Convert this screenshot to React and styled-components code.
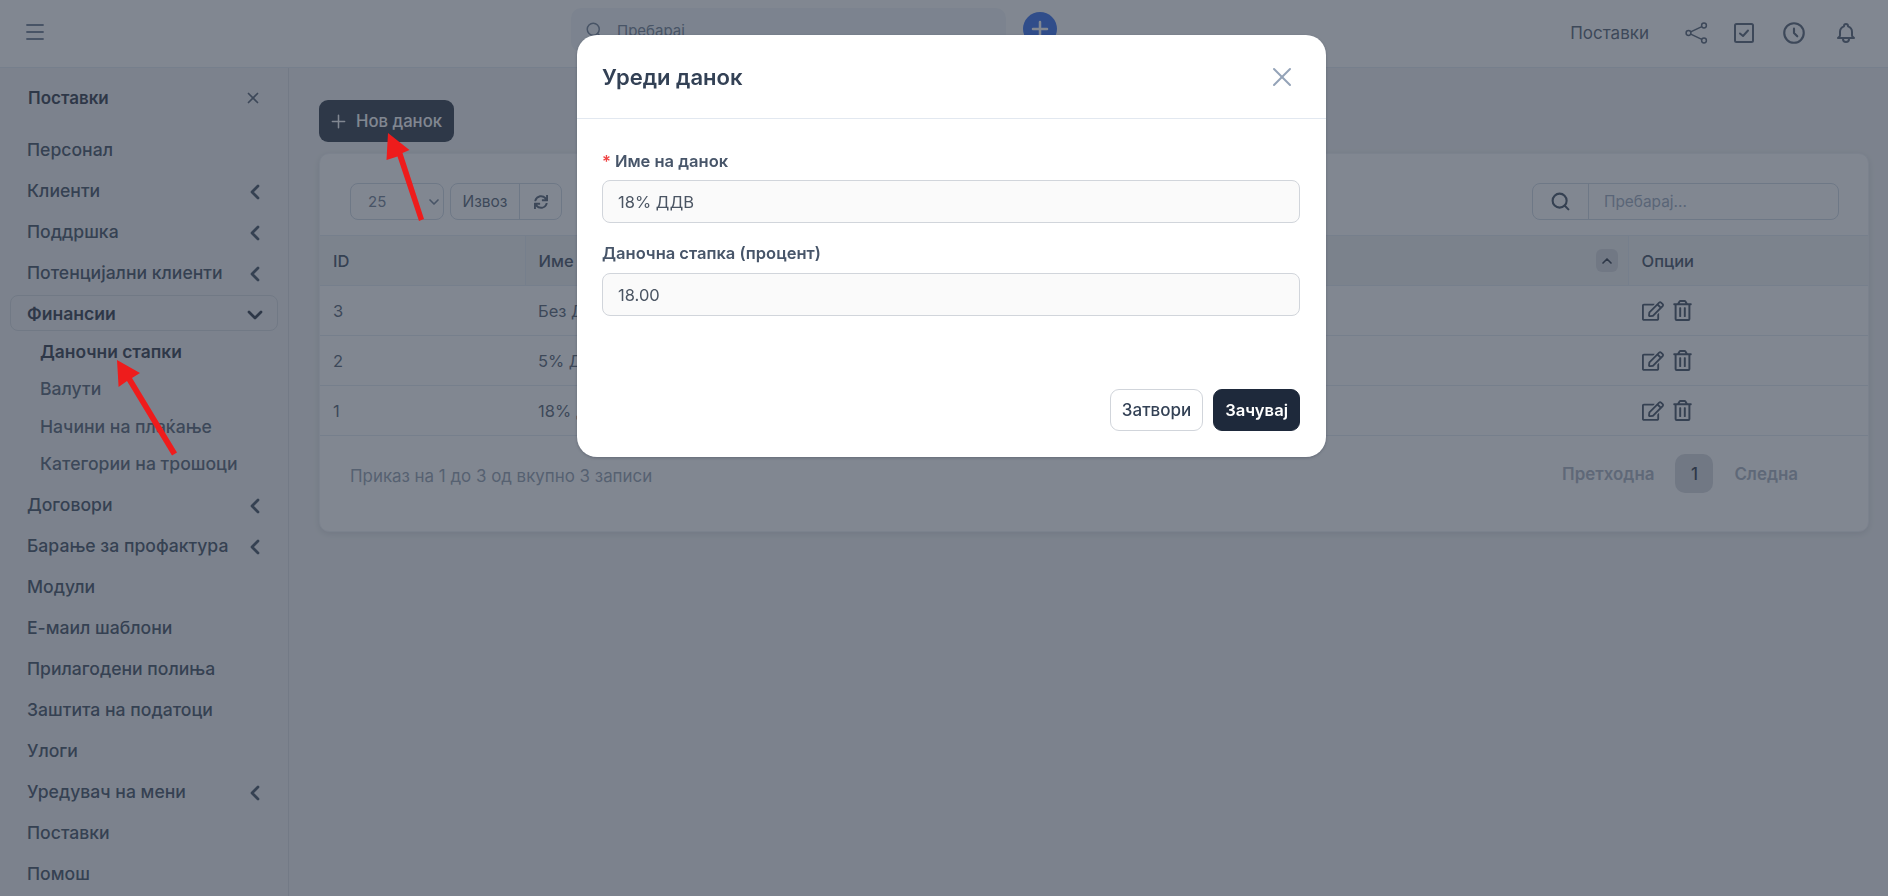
import React from 'react';
import styled, { createGlobalStyle } from 'styled-components';
import { Menu, Plus, X, ChevronLeft, ChevronDown, ChevronUp, Search as SearchLine } from 'lucide-react';
import { HiOutlineClock, HiOutlineBell } from 'react-icons/hi';
import { FaRegEdit, FaRegTrashAlt, FaSync } from 'react-icons/fa';

const GlobalStyle = createGlobalStyle`
  * { box-sizing: border-box; }
  html, body { margin: 0; padding: 0; height: 100%; overflow: hidden; }
  body { font-family: Inter, "Noto Sans", sans-serif; background: #f1f2f3; color: #334155; }
`;

const Page = styled.div`
  height: 100vh;
  display: flex;
  flex-direction: column;
  overflow: hidden;
`;

const Topbar = styled.header`
  height: 68px;
  flex: none;
  background: #fff;
  border-bottom: 1px solid #e2e8f0;
  display: flex;
  align-items: flex-start;
  padding: 0 30px 0 23px;
`;

const MenuButton = styled.div`
  width: 24px;
  height: 64px;
  display: flex;
  align-items: center;
  color: #64748b;
`;

const TopSearch = styled.div`
  margin: 8px 0 0 524px;
  width: 435px;
  height: 44px;
  border-radius: 10px;
  background: #f1f5f9;
  display: flex;
  align-items: center;
  gap: 14px;
  padding: 0 0 0 14px;
  font-size: 15px;
  color: #64748b;
`;

const QuickAdd = styled.div`
  margin: 12px 0 0 17px;
  width: 34px;
  height: 34px;
  border-radius: 50%;
  background: #2563eb;
  color: #fff;
  display: flex;
  align-items: center;
  justify-content: center;
`;

const TopRight = styled.div`
  margin-left: auto;
  height: 66px;
  display: flex;
  align-items: center;
  font-size: 17px;
  color: #475569;
`;

const TopLink = styled.span`
  margin-right: 35px;
`;

const TopIcon = styled.span`
  display: flex;
  color: #475569;
  margin-right: ${p => p.$gap}px;
`;

const Body = styled.div`
  flex: 1;
  display: flex;
  min-height: 0;
`;

const Sidebar = styled.aside`
  width: 289px;
  flex: none;
  border-right: 1px solid #d8dce2;
  padding: 20px 10px 0 10px;
  overflow: hidden;
`;

const SideTitle = styled.div`
  display: flex;
  align-items: center;
  justify-content: space-between;
  height: 20px;
  padding: 0 16px 0 18px;
  margin-bottom: 23px;
  font-size: 17px;
  font-weight: 600;
  color: #1e293b;
`;

const SideClose = styled.span`
  display: flex;
  color: #475569;
`;

const Nav = styled.nav`
  display: flex;
  flex-direction: column;
  gap: 5px;
`;

const NavItem = styled.div`
  height: 36px;
  flex: none;
  display: flex;
  align-items: center;
  justify-content: space-between;
  padding: 0 10px 0 16px;
  font-size: 17.6px;
  border-radius: 8px;
  border: 1px solid ${p => (p.$open ? '#d3d8df' : 'transparent')};
  font-weight: ${p => (p.$open ? 600 : 500)};
  color: ${p => (p.$open ? '#1e293b' : '#334155')};
  white-space: nowrap;

  svg {
    margin-top: 4px;
  }
`;

const SubList = styled.div`
  display: flex;
  flex-direction: column;
  margin: -3px 0 -1px;
`;

const SubItem = styled.div`
  height: 37.33px;
  display: flex;
  align-items: center;
  padding-left: 30px;
  font-size: ${p => (p.$active ? 17.4 : 17.6)}px;
  font-weight: ${p => (p.$active ? 600 : 500)};
  color: ${p => (p.$active ? '#1e293b' : '#475569')};
`;

const Main = styled.main`
  flex: 1;
  min-width: 0;
  padding: 32px 19px 0 30px;
`;

const NewButton = styled.div`
  display: inline-flex;
  align-items: center;
  gap: 7px;
  height: 42px;
  padding: 0 12px 0 9px;
  border-radius: 9px;
  background: #1e293b;
  color: #fff;
  font-size: 16.7px;
  font-weight: 500;
`;

const Card = styled.section`
  margin-top: 11px;
  height: 379px;
  background: #fff;
  border: 1px solid #eef0f3;
  border-radius: 10px;
  box-shadow: 0 2px 6px rgba(15, 23, 42, 0.12);
  overflow: hidden;
`;

const Toolbar = styled.div`
  height: 81px;
  padding: 29px 29px 0 30px;
  display: flex;
  align-items: flex-start;
`;

const PerPage = styled.div`
  width: 94px;
  height: 37px;
  border: 1px solid #cbd5e1;
  border-radius: 8px;
  display: flex;
  align-items: center;
  justify-content: space-between;
  padding: 0 1px 0 17px;
  font-size: 15px;
  color: #64748b;
`;

const ButtonGroup = styled.div`
  margin-left: 6px;
  height: 37px;
  display: flex;
  border: 1px solid #cbd5e1;
  border-radius: 8px;
  font-size: 15.5px;
  color: #475569;
`;

const GroupCell = styled.div`
  width: ${p => p.$width}px;
  display: flex;
  align-items: center;
  justify-content: center;
  & + & { border-left: 1px solid #cbd5e1; }
`;

const TableSearch = styled.div`
  margin-left: auto;
  width: 307px;
  height: 37px;
  display: flex;
  border: 1px solid #cbd5e1;
  border-radius: 8px;
  font-size: 15.4px;
  color: #94a3b8;
`;

const SearchAddon = styled.div`
  width: 56px;
  flex: none;
  display: flex;
  align-items: center;
  justify-content: center;
  border-right: 1px solid #cbd5e1;
  color: #334155;
`;

const SearchText = styled.div`
  display: flex;
  align-items: center;
  padding-left: 15px;
`;

const Table = styled.table`
  width: 100%;
  border-collapse: collapse;
  table-layout: fixed;
  font-size: 16.5px;
  color: #475569;
`;

const Th = styled.th`
  width: ${p => (p.$width ? `${p.$width}px` : 'auto')};
  height: 50px;
  padding: 0 13px;
  text-align: left;
  font-weight: 500;
  color: #334155;
  background: ${p => (p.$plain ? '#f2f3f5' : '#eff0f2')};
  border-top: 1px solid #e2e8f0;
  border-bottom: 1px solid #e2e8f0;
  & + & { border-left: 1px solid #e2e8f0; }
`;

const ThInner = styled.div`
  display: flex;
  align-items: center;
  justify-content: space-between;
  margin-right: -3px;
`;

const SortBadge = styled.span`
  width: 22px;
  height: 23px;
  border-radius: 6px;
  background: #d3d6db;
  color: #1e293b;
  display: flex;
  align-items: center;
  justify-content: center;
`;

const Td = styled.td`
  height: 50px;
  padding: 0 11px 0 13px;
  border-bottom: 1px solid #e2e8f0;
`;

const RowActions = styled.div`
  display: flex;
  align-items: center;
  gap: 8px;
  margin-left: 1px;
  color: #334155;
`;

const TableFooter = styled.div`
  display: flex;
  align-items: flex-start;
  justify-content: space-between;
  padding: 18px 70px 0 30px;
  font-size: 16.9px;
  color: #8b97a8;
`;

const FooterInfo = styled.span`
  margin-top: 12px;
`;

const Pager = styled.div`
  display: flex;
  align-items: center;
  gap: 21px;
  font-weight: 600;
  color: #a3acba;
`;

const PageNumber = styled.div`
  width: 38px;
  height: 39px;
  border-radius: 10px;
  background: #d3d6db;
  color: #1e293b;
  font-weight: 500;
  display: flex;
  align-items: center;
  justify-content: center;
`;

const Overlay = styled.div`
  position: fixed;
  inset: 0;
  background: rgba(55, 65, 81, 0.63);
`;

const Modal = styled.div`
  position: fixed;
  top: 35px;
  left: 577px;
  width: 749px;
  height: 422px;
  background: #fff;
  border-radius: 20px;
  box-shadow: 0 1px 3px rgba(15, 23, 42, 0.25);
  display: flex;
  flex-direction: column;
`;

const ModalHead = styled.div`
  height: 84px;
  flex: none;
  border-bottom: 1px solid #e2e8f0;
  display: flex;
  align-items: center;
  justify-content: space-between;
  padding: 0 28px 0 25px;
`;

const ModalTitle = styled.h4`
  margin: 0;
  font-size: 22px;
  font-weight: 600;
  color: #334155;
`;

const ModalClose = styled.span`
  display: flex;
  color: #94a3b8;
`;

const ModalBody = styled.div`
  flex: 1;
  padding: 32px 26px 0 25px;
`;

const Label = styled.label`
  display: block;
  height: 20px;
  line-height: 20px;
  font-size: 16.5px;
  font-weight: 600;
  color: #475569;
`;

const Required = styled.span`
  color: #ef4444;
  margin-right: 4px;
`;

const Input = styled.input`
  display: block;
  width: 100%;
  height: 43px;
  margin: 9px 0 20px;
  padding: 0 15px;
  border: 1px solid #d1d5db;
  border-radius: 8px;
  background: #fafafa;
  font-family: inherit;
  font-size: 16.5px;
  color: #4b5563;
  outline: none;
  & ~ & { margin-top: 10px; }
`;

const ModalFoot = styled.div`
  display: flex;
  justify-content: flex-end;
  gap: 10px;
  padding: 0 26px 26px;
`;

const FootButton = styled.div`
  height: 42px;
  padding: 0 11px;
  border-radius: 9px;
  display: flex;
  align-items: center;
  font-size: ${p => (p.$primary ? 16.6 : 17)}px;
  font-weight: ${p => (p.$primary ? 600 : 500)};
  color: ${p => (p.$primary ? '#fff' : '#334155')};
  background: ${p => (p.$primary ? '#1e293b' : '#fff')};
  border: 1px solid ${p => (p.$primary ? '#1e293b' : '#d1d5db')};
`;

const Annotations = styled.svg`
  position: fixed;
  inset: 0;
  width: 100%;
  height: 100%;
  pointer-events: none;
`;

const ShareIcon = () => (
  <svg width="24" height="24" viewBox="0 0 24 24" fill="none" stroke="currentColor" strokeWidth="1.5">
    <circle cx="20" cy="4.5" r="2.4" />
    <circle cx="4.5" cy="12" r="2.4" />
    <circle cx="20" cy="19.5" r="2.4" />
    <path d="M6.7 10.9L17.8 5.6M6.7 13.1l11.1 5.3" />
  </svg>
);

const CheckSquare = () => (
  <svg width="24" height="24" viewBox="0 0 24 24" fill="none" stroke="currentColor" strokeWidth="2" strokeLinecap="round" strokeLinejoin="round">
    <rect x="3" y="3" width="18" height="18" rx="1.5" />
    <path d="M8 12.5l3 2.5 5-5.5" />
  </svg>
);

const navBefore = [
  { label: 'Персонал' },
  { label: 'Клиенти', arrow: true },
  { label: 'Поддршка', arrow: true },
  { label: 'Потенцијални клиенти', arrow: true },
];

const subItems = ['Даночни стапки', 'Валути', 'Начини на плаќање', 'Категории на трошоци'];

const navAfter = [
  { label: 'Договори', arrow: true },
  { label: 'Барање за профактура', arrow: true },
  { label: 'Модули' },
  { label: 'Е-маил шаблони' },
  { label: 'Прилагодени полиња' },
  { label: 'Заштита на податоци' },
  { label: 'Улоги' },
  { label: 'Уредувач на мени', arrow: true },
  { label: 'Поставки' },
  { label: 'Помош' },
];

const rows = [
  { id: 3, name: 'Без ДДВ' },
  { id: 2, name: '5% ДДВ' },
  { id: 1, name: '18% ДДВ' },
];

const renderNav = (items) =>
  items.map((item) => (
    <NavItem key={item.label}>
      {item.label}
      {item.arrow && <ChevronLeft size={24} strokeWidth={2.75} />}
    </NavItem>
  ));

export default function App() {
  return (
    <Page>
      <GlobalStyle />
      <Topbar>
        <MenuButton><Menu size={24} strokeWidth={1.8} /></MenuButton>
        <TopSearch><SearchLine size={18} />Пребарај</TopSearch>
        <QuickAdd><Plus size={24} strokeWidth={2.5} /></QuickAdd>
        <TopRight>
          <TopLink>Поставки</TopLink>
          <TopIcon $gap={24}><ShareIcon /></TopIcon>
          <TopIcon $gap={25}><CheckSquare /></TopIcon>
          <TopIcon $gap={27}><HiOutlineClock size={26} /></TopIcon>
          <TopIcon $gap={0}><HiOutlineBell size={24} /></TopIcon>
        </TopRight>
      </Topbar>
      <Body>
        <Sidebar>
          <SideTitle>
            Поставки
            <SideClose><X size={18} strokeWidth={2.25} /></SideClose>
          </SideTitle>
          <Nav>
            {renderNav(navBefore)}
            <NavItem $open>Финансии<ChevronDown size={24} strokeWidth={2.75} /></NavItem>
            <SubList>
              {subItems.map((label, i) => (
                <SubItem key={label} $active={i === 0}>{label}</SubItem>
              ))}
            </SubList>
            {renderNav(navAfter)}
          </Nav>
        </Sidebar>
        <Main>
          <NewButton><Plus size={21} strokeWidth={1.75} />Нов данок</NewButton>
          <Card>
            <Toolbar>
              <PerPage>25<ChevronDown size={16} strokeWidth={2.5} /></PerPage>
              <ButtonGroup>
                <GroupCell $width={68}>Извоз</GroupCell>
                <GroupCell $width={42}><FaSync size={14} /></GroupCell>
              </ButtonGroup>
              <TableSearch>
                <SearchAddon><SearchLine size={21} strokeWidth={2.4} /></SearchAddon>
                <SearchText>Пребарај...</SearchText>
              </TableSearch>
            </Toolbar>
            <Table>
              <thead>
                <tr>
                  <Th $width={205} $plain>ID</Th>
                  <Th>
                    <ThInner>
                      Име
                      <SortBadge><ChevronUp size={16} strokeWidth={2.5} /></SortBadge>
                    </ThInner>
                  </Th>
                  <Th $width={240} $plain>Опции</Th>
                </tr>
              </thead>
              <tbody>
                {rows.map((row) => (
                  <tr key={row.id}>
                    <Td>{row.id}</Td>
                    <Td>{row.name}</Td>
                    <Td>
                      <RowActions>
                        <FaRegEdit size={22} />
                        <FaRegTrashAlt size={21} />
                      </RowActions>
                    </Td>
                  </tr>
                ))}
              </tbody>
            </Table>
            <TableFooter>
              <FooterInfo>Приказ на 1 до 3 од вкупно 3 записи</FooterInfo>
              <Pager>
                <span>Претходна</span>
                <PageNumber>1</PageNumber>
                <span>Следна</span>
              </Pager>
            </TableFooter>
          </Card>
        </Main>
      </Body>
      <Overlay />
      <Modal>
        <ModalHead>
          <ModalTitle>Уреди данок</ModalTitle>
          <ModalClose><X size={32} strokeWidth={1.5} /></ModalClose>
        </ModalHead>
        <ModalBody>
          <Label><Required>*</Required>Име на данок</Label>
          <Input defaultValue="18% ДДВ" />
          <Label>Даночна стапка (процент)</Label>
          <Input defaultValue="18.00" />
        </ModalBody>
        <ModalFoot>
          <FootButton>Затвори</FootButton>
          <FootButton $primary>Зачувај</FootButton>
        </ModalFoot>
      </Modal>
      <Annotations viewBox="0 0 1888 896">
        <path d="M419 221 L397.5 156.5 L386.5 160 L388 133 L409.5 150 L402.5 153 L424 219 Z" fill="#ee1c1c" />
        <path d="M172 455.5 L127 381 L118.6 387 L117 360 L140 373 L132 378 L177 452.5 Z" fill="#ee1c1c" />
      </Annotations>
    </Page>
  );
}
